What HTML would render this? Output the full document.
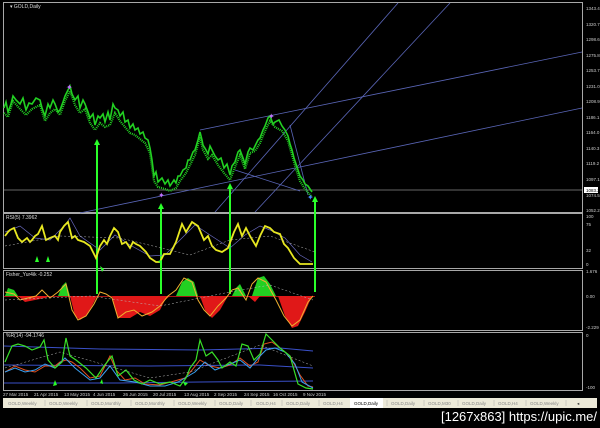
<!DOCTYPE html>
<html><head><meta charset="utf-8"><style>
html,body{margin:0;padding:0;background:#000;width:600px;height:428px;overflow:hidden}
svg{display:block}
text{font-family:"Liberation Sans",sans-serif}
</style></head><body>
<svg width="600" height="428" viewBox="0 0 600 428" xmlns="http://www.w3.org/2000/svg">
<rect width="600" height="428" fill="#000"/>
<g fill="none" stroke="#a8a8a8" stroke-width="1">
<rect x="3.5" y="2.5" width="579" height="210"/>
<rect x="3.5" y="213.5" width="579" height="55"/>
<rect x="3.5" y="270.5" width="579" height="60"/>
<rect x="3.5" y="332.5" width="579" height="58"/>
</g>
<text x="10" y="8" font-size="5" fill="#ddd">▾ GOLD,Daily</text>
<line x1="4" y1="190" x2="582" y2="190" stroke="#888" stroke-width="0.8"/>
<g stroke="#5a66b8" stroke-width="0.8" fill="none">
<line x1="80" y1="213" x2="582" y2="108"/>
<line x1="200" y1="130" x2="582" y2="52"/>
<line x1="215" y1="212" x2="398" y2="3"/>
<line x1="255" y1="212" x2="450" y2="3"/>
<line x1="235" y1="170" x2="300" y2="191"/>
<line x1="290" y1="125" x2="308" y2="195"/>
</g>
<g fill="none" stroke="#22d022">
<polyline stroke-width="2.2" stroke-dasharray="1,1" transform="translate(0,5)" points="4,108 8,112 13,96 20,104 26,110 32,104 40,100 45,116 50,108 55,104 60,110 65,96 70,86 75,100 80,108 85,104 90,118 95,125 100,118 105,122 110,120 115,108 120,116 125,122 130,128 135,130 140,134 145,138 150,148 154,176 158,182 165,184 170,186 176,183 180,176 186,168 190,160 195,150 200,132 203,145 208,154 212,150 218,160 224,168 230,175 235,162 240,150 245,164 250,148 255,146 260,138 265,126 270,116 275,122 282,126 288,136 292,150 296,164 300,176 305,184 312,192"/>
<polyline stroke-width="1.6" points="4,108 6,102 8,112 11,104 13,96 16,100 20,104 23,98 26,110 29,103 32,104 36,98 40,100 42,108 45,116 48,104 50,108 53,100 55,104 58,112 60,110 63,102 65,96 68,90 70,86 72,94 75,100 78,96 80,108 83,100 85,104 88,112 90,118 93,114 95,125 98,116 100,118 103,114 105,122 108,112 110,120 113,104 115,108 118,110 120,116 123,112 125,122 128,120 130,128 133,124 135,130 138,128 140,134 143,132 145,138 148,140 150,148 152,160 154,176 156,172 158,182 162,178 165,184 168,180 170,186 174,180 176,183 178,176 180,176 183,170 186,168 188,160 190,160 193,152 195,150 198,140 200,132 202,140 203,145 206,150 208,154 210,146 212,150 215,156 218,160 221,158 224,168 227,164 230,175 232,166 235,162 238,152 240,150 243,158 245,164 248,152 250,148 253,150 255,146 258,140 260,138 263,130 265,126 268,118 270,116 273,124 275,122 279,120 282,126 285,130 288,136 290,144 292,150 294,158 296,164 298,170 300,176 303,180 305,184 308,186 312,192"/>
</g>
<g fill="#c070ff" font-size="8"><text x="66" y="90">✦</text><text x="158" y="198">✦</text><text x="268" y="119">✦</text><text x="307" y="200" fill="#4488ff">✦</text></g>
<g stroke="#2aff2a" stroke-width="2">
<line x1="97" y1="142" x2="97" y2="294"/>
<line x1="161" y1="207" x2="161" y2="294"/>
<line x1="230" y1="186" x2="230" y2="294"/>
<line x1="315" y1="200" x2="315" y2="292"/>
</g>
<g fill="#2aff2a"><path d="M97,139 l-3,6 h6z"/><path d="M161,203 l-3,6 h6z"/><path d="M230,183 l-3,6 h6z"/><path d="M315,196 l-3,6 h6z"/></g>
<text x="6" y="219" font-size="5" fill="#ddd">RSI(5) 7.3962</text>
<polyline fill="none" stroke="#6a6ac0" stroke-width="0.7" points="5,232 20,226 35,238 50,240 65,225 70,218 80,236 100,250 115,235 130,245 150,256 165,255 180,240 195,225 210,235 230,248 245,235 260,226 270,230 285,238 300,255 312,262"/>
<polyline fill="none" stroke="#e8e820" stroke-width="1.8" points="5,236 8,232 10,230 14,228 18,238 22,242 27,238 30,242 32,240 35,236 38,234 42,226 46,240 50,238 55,236 58,240 60,232 64,226 68,222 72,238 75,236 78,240 84,242 90,246 96,258 100,246 104,240 107,244 110,236 114,228 118,232 122,244 126,242 130,248 133,242 136,244 140,246 146,252 150,258 156,262 160,262 164,254 170,254 176,242 182,224 186,232 192,222 198,226 204,240 208,236 212,246 216,250 222,252 228,248 234,232 238,224 242,236 246,228 250,236 256,246 260,236 265,226 270,228 274,232 280,234 284,244 288,248 294,258 300,264 306,264 313,264"/>
<polyline fill="none" stroke="#bbb" stroke-width="0.5" stroke-dasharray="2,2" points="5,246 60,236 120,238 190,255 230,240 270,236 315,252"/>
<text x="6" y="276" font-size="5" fill="#ddd">Fisher_Yur4ik -0.252</text>
<g fill="#e01818">
<polygon points="18,296 25,302 35,300 45,298 50,296"/>
<polygon points="70,296 75,316 80,320 86,316 92,306 97,296"/>
<polygon points="112,296 118,318 130,318 140,312 150,316 160,310 165,300 170,296"/>
<polygon points="200,296 205,310 212,318 220,310 228,296"/>
<polygon points="248,296 255,302 260,296"/>
<polygon points="278,296 285,316 292,328 298,326 305,312 312,296"/>
</g>
<g fill="#22d022">
<polygon points="5,296 8,288 14,290 18,296"/>
<polygon points="58,296 62,286 66,282 70,296"/>
<polygon points="176,296 182,282 188,278 194,282 198,296"/>
<polygon points="232,296 236,288 240,284 246,296"/>
<polygon points="252,296 258,278 264,276 270,284 276,296"/>
</g>
<line x1="4" y1="296.5" x2="315" y2="296.5" stroke="#e01818" stroke-width="0.8"/>
<polyline fill="none" stroke="#f0b030" stroke-width="1" points="5,292 14,294 20,300 28,298 36,296 42,290 50,298 58,292 66,284 72,310 78,320 86,316 94,304 100,292 106,294 112,298 118,318 126,312 134,310 142,316 152,312 160,306 168,296 176,290 184,278 192,282 198,300 204,310 210,316 218,306 226,298 232,290 238,288 246,300 252,284 258,278 266,282 276,300 284,316 292,326 300,320 308,302 313,296"/>
<polyline fill="none" stroke="#bbb" stroke-width="0.5" stroke-dasharray="2,2" points="5,300 90,296 160,306 230,292 270,285 313,300"/>
<text x="6" y="337" font-size="5" fill="#ddd">%R(14) -94.1746</text>
<g stroke="#3a50c8" stroke-width="1" fill="none">
<polyline points="4,346 100,349 200,350 280,348 313,351"/>
<polyline points="4,365 150,366 260,365 313,368"/>
<polyline points="4,383 120,383 200,382 313,381"/>
</g>
<polyline fill="none" stroke="#e05020" stroke-width="1" points="5,372 15,366 25,370 35,372 45,366 55,366 60,362 66,360 72,362 80,368 90,378 100,376 110,356 116,370 125,380 135,378 145,384 160,385 178,380 185,378 192,370 200,360 210,366 220,368 230,365 240,358 250,366 258,362 264,344 272,342 280,348 290,356 300,375 308,386 313,387"/>
<polyline fill="none" stroke="#3aa0f0" stroke-width="1" points="5,372 15,368 25,372 35,370 45,364 55,368 65,358 75,368 90,380 100,378 110,366 120,380 135,382 150,386 165,386 178,382 185,378 195,372 205,362 215,370 225,366 240,360 250,368 260,356 266,350 275,348 285,352 295,364 302,382 313,388"/>
<polyline fill="none" stroke="#38e028" stroke-width="1.2" points="5,362 12,346 18,344 25,346 32,350 40,347 44,340 48,360 55,368 62,362 66,338 70,356 76,360 86,368 96,378 104,366 112,356 118,376 126,370 134,380 142,384 150,380 160,384 170,382 180,386 186,378 190,368 196,360 200,340 206,356 212,352 218,360 222,368 230,362 236,366 242,344 248,346 254,360 260,354 266,334 272,340 280,348 290,356 298,384 306,388 313,389"/>
<polyline fill="none" stroke="#bbb" stroke-width="0.5" stroke-dasharray="2,2" points="5,368 60,352 150,378 190,372 260,345 313,366"/>
<g fill="#2aff2a"><path d="M35,262 l2,-6 l2,6z"/><path d="M46,262 l2,-6 l2,6z"/><path d="M102,272 l-2,-6 l4,3z"/><path d="M161,264 l-3,-3 l4,-1z"/><path d="M55,380 l-2,6 l4,-1z"/><path d="M100,383 l2,-4 l1,5z"/><path d="M185,386 l-2,-4 l5,1z"/></g>
<g font-size="4.5" fill="#ccc">
<text x="586" y="10">1343.4</text><text x="586" y="26">1320.7</text><text x="586" y="41">1298.6</text><text x="586" y="57">1275.8</text><text x="586" y="72">1253.7</text><text x="586" y="88">1231.0</text><text x="586" y="103">1208.9</text><text x="586" y="119">1186.1</text><text x="586" y="134">1164.0</text><text x="586" y="150">1140.3</text><text x="586" y="165">1119.2</text><text x="586" y="181">1097.1</text><text x="586" y="197">1074.5</text><text x="586" y="212">1052.2</text>
<text x="586" y="218">100</text><text x="586" y="226">75</text><text x="586" y="252">32</text><text x="586" y="266">0</text>
<text x="586" y="273">1.676</text><text x="586" y="298">0.00</text><text x="586" y="329">-2.229</text>
<text x="586" y="337">0</text><text x="586" y="389">-100</text>
</g>
<rect x="584" y="187" width="14" height="6" fill="#fff"/>
<text x="586" y="192" font-size="4.5" fill="#000">1083.2</text>
<g font-size="4.5" fill="#ccc">
<text x="3" y="396">27 Mar 2015</text><text x="34" y="396">21 Apr 2015</text><text x="64" y="396">13 May 2015</text><text x="93" y="396">4 Jun 2015</text><text x="123" y="396">26 Jun 2015</text><text x="153" y="396">20 Jul 2015</text><text x="184" y="396">13 Aug 2015</text><text x="214" y="396">2 Sep 2015</text><text x="244" y="396">24 Sep 2015</text><text x="273" y="396">16 Oct 2015</text><text x="303" y="396">9 Nov 2015</text>
</g>
<rect x="3" y="398" width="594" height="10" fill="#ece9d8"/>
<rect x="350" y="398" width="33" height="10" fill="#fff"/>
<g font-size="4.5" fill="#888">
<text x="8" y="405">GOLD,Weekly</text><text x="49" y="405">GOLD,Weekly</text><text x="91" y="405">GOLD,Monthly</text><text x="135" y="405">GOLD,Monthly</text><text x="178" y="405">GOLD,Weekly</text><text x="219" y="405">GOLD,Daily</text><text x="256" y="405">GOLD,H4</text><text x="286" y="405">GOLD,Daily</text><text x="323" y="405">GOLD,H4</text><text x="354" y="405" fill="#000">GOLD,Daily</text><text x="391" y="405">GOLD,Daily</text><text x="428" y="405">GOLD,M30</text><text x="462" y="405">GOLD,Daily</text><text x="498" y="405">GOLD,H4</text><text x="530" y="405">GOLD,Weekly</text><text x="577" y="405" fill="#333">◂</text>
</g>
<g stroke="#aaa" stroke-width="0.5"><line x1="45" y1="400" x2="45" y2="406"/><line x1="87" y1="400" x2="87" y2="406"/><line x1="131" y1="400" x2="131" y2="406"/><line x1="174" y1="400" x2="174" y2="406"/><line x1="215" y1="400" x2="215" y2="406"/><line x1="251" y1="400" x2="251" y2="406"/><line x1="282" y1="400" x2="282" y2="406"/><line x1="319" y1="400" x2="319" y2="406"/><line x1="387" y1="400" x2="387" y2="406"/><line x1="424" y1="400" x2="424" y2="406"/><line x1="458" y1="400" x2="458" y2="406"/><line x1="494" y1="400" x2="494" y2="406"/><line x1="526" y1="400" x2="526" y2="406"/><line x1="566" y1="400" x2="566" y2="406"/></g>
<text x="441" y="421" font-size="13" fill="#fff" textLength="156" lengthAdjust="spacingAndGlyphs">[1267x863] https://upic.me/</text>
</svg>
</body></html>
